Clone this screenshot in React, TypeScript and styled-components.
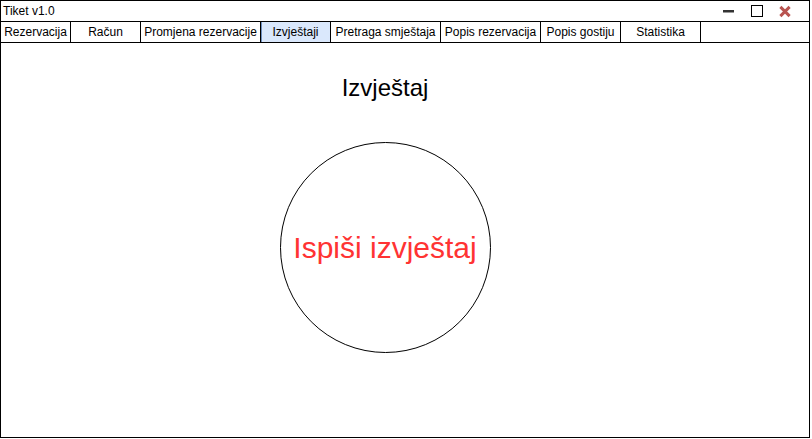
import React from "react";
import styled, { createGlobalStyle } from "styled-components";

const GlobalStyle = createGlobalStyle`
  html, body {
    margin: 0;
    padding: 0;
    background: #ffffff;
  }
  body {
    font-family: "Liberation Sans", Arial, sans-serif;
  }
`;

const tabs = [
  { label: "Rezervacija", width: 70 },
  { label: "Račun", width: 70 },
  { label: "Promjena rezervacije", width: 120 },
  { label: "Izvještaji", width: 70, active: true },
  { label: "Pretraga smještaja", width: 110 },
  { label: "Popis rezervacija", width: 100 },
  { label: "Popis gostiju", width: 80 },
  { label: "Statistika", width: 80 },
];

const App = () => {
  return (
    <>
      <GlobalStyle />
      <Window>
        <TitleBar>
          <TitleText>Tiket v1.0</TitleText>
          <Controls>
            <ControlButton aria-label="minimize">
              <svg width="12" height="12" viewBox="0 0 12 12">
                <rect x="0" y="5" width="11" height="2.5" fill="#333333" />
              </svg>
            </ControlButton>
            <ControlButton aria-label="maximize">
              <svg width="12" height="12" viewBox="0 0 12 12">
                <rect x="0.5" y="0.5" width="11" height="11" fill="none" stroke="#000000" strokeWidth="1" />
              </svg>
            </ControlButton>
            <ControlButton aria-label="close">
              <svg width="13" height="13" viewBox="0 0 13 13">
                <path d="M1.5 1.5 L11.5 11.5 M11.5 1.5 L1.5 11.5" stroke="#b85450" strokeWidth="3.2" strokeLinecap="butt" />
              </svg>
            </ControlButton>
          </Controls>
        </TitleBar>
        <TabBar>
          {tabs.map((t) => (
            <Tab key={t.label} $width={t.width} $active={t.active}>
              {t.label}
            </Tab>
          ))}
        </TabBar>
        <Main>
          <Heading>Izvještaj</Heading>
          <PrintButton>Ispiši izvještaj</PrintButton>
        </Main>
      </Window>
    </>
  );
};

const Window = styled.div`
  box-sizing: border-box;
  width: 810px;
  height: 438px;
  border: 1px solid #000000;
  display: flex;
  flex-direction: column;
  background: #ffffff;
`;

const TitleBar = styled.div`
  height: 20px;
  border-bottom: 1px solid #000000;
  display: flex;
  align-items: center;
  justify-content: space-between;
  padding: 0 18px 0 2px;
`;

const TitleText = styled.span`
  font-size: 12px;
  color: #000000;
`;

const Controls = styled.div`
  display: flex;
  align-items: center;
  gap: 16px;
`;

const ControlButton = styled.span`
  display: flex;
  align-items: center;
  justify-content: center;
  width: 12px;
  height: 12px;
`;

const TabBar = styled.div`
  height: 20px;
  border-bottom: 1px solid #000000;
  display: flex;
`;

const Tab = styled.div<{ $width: number; $active?: boolean }>`
  box-sizing: border-box;
  width: ${(p) => p.$width}px;
  height: 100%;
  border-right: 1px solid #000000;
  background: ${(p) => (p.$active ? "#dae8fc" : "#ffffff")};
  box-shadow: ${(p) => (p.$active ? "inset 1px 0 0 #6c8ebf" : "none")};
  display: flex;
  align-items: center;
  justify-content: center;
  font-size: 12px;
  color: #000000;
  white-space: nowrap;
`;

const Main = styled.div`
  flex: 1;
  display: flex;
  flex-direction: column;
  align-items: center;
  padding: 31px 40px 0 0;
`;

const Heading = styled.div`
  font-size: 24px;
  line-height: 28px;
  color: #000000;
`;

const PrintButton = styled.div`
  box-sizing: border-box;
  margin-top: 40px;
  width: 211px;
  height: 211px;
  border: 1px solid #000000;
  border-radius: 50%;
  display: flex;
  align-items: center;
  justify-content: center;
  font-size: 30px;
  color: #ff3333;
  white-space: nowrap;
`;

export default App;
